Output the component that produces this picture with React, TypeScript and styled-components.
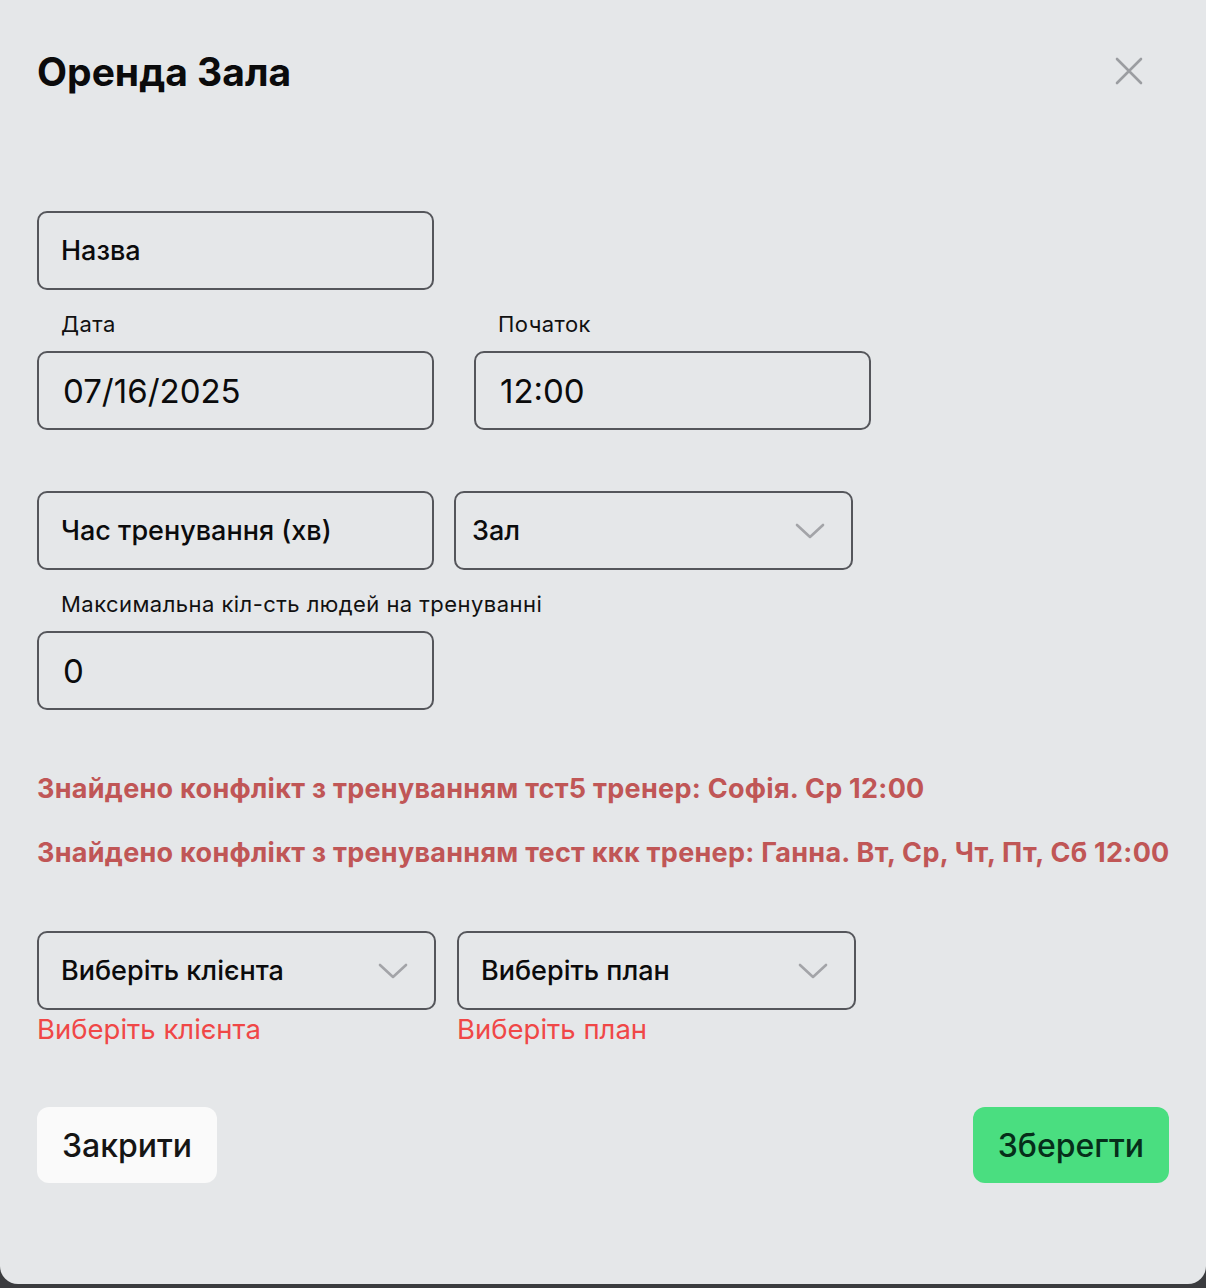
import React from 'react';
import styled, { createGlobalStyle } from 'styled-components';

const GlobalStyle = createGlobalStyle`
  html, body {
    margin: 0;
    padding: 0;
    background: #3b3c3f;
    font-family: Inter, "Noto Sans", "Liberation Sans", sans-serif;
  }
  * { box-sizing: border-box; }
`;

const Modal = styled.div`
  width: 1206px;
  height: 1284px;
  background: #e5e7e9;
  border-radius: 0 0 18px 18px;
  padding: 0 37px;
  display: flex;
  flex-direction: column;
`;

const Header = styled.div`
  display: flex;
  align-items: center;
  justify-content: space-between;
  height: 142px;
`;

const Title = styled.h2`
  margin: 0;
  font-size: 39px;
  font-weight: 700;
  color: #0b0b0c;
`;

const CloseButton = styled.button`
  width: 40px;
  height: 40px;
  border: none;
  background: transparent;
  padding: 0;
  margin-right: 20px;
  display: flex;
  align-items: center;
  justify-content: center;
  cursor: pointer;
`;

const Form = styled.div`
  display: flex;
  flex-direction: column;
  padding-top: 69px;
`;

const Row = styled.div<{ $gap: number; $mt?: number }>`
  display: flex;
  align-items: flex-start;
  gap: ${p => p.$gap}px;
  margin-top: ${p => p.$mt ?? 0}px;
`;

const Field = styled.div`
  display: flex;
  flex-direction: column;
`;

const Label = styled.div`
  font-size: 22px;
  letter-spacing: 0.45px;
  color: #111;
  padding-left: 24px;
  height: 40px;
  line-height: 26px;
  margin-top: 21px;
`;

const InputBox = styled.div<{ $w?: number; $big?: boolean; $pl?: number }>`
  width: ${p => p.$w ?? 397}px;
  height: 79px;
  border: 2px solid #55565b;
  border-radius: 10px;
  display: flex;
  align-items: center;
  justify-content: space-between;
  padding: 0 26px 0 ${p => p.$pl ?? (p.$big ? 24 : 22)}px;
  font-size: ${p => (p.$big ? 33 : 27)}px;
  font-weight: ${p => (p.$big ? 400 : 500)};
  color: #0b0b0c;
`;

const SelectText = styled.span`
  font-size: 27px;
  font-weight: 500;
  color: #0b0b0c;
`;

const Conflicts = styled.div`
  display: flex;
  flex-direction: column;
  gap: 34px;
  margin-top: 64px;
`;

const Conflict = styled.div`
  font-size: 27px;
  font-weight: 700;
  color: #c05656;
  line-height: 30px;
  letter-spacing: 0.28px;
  white-space: nowrap;
`;

const ErrorText = styled.div`
  font-size: 27.5px;
  color: #f04747;
  margin-top: 3px;
  line-height: 32px;
`;

const Footer = styled.div`
  display: flex;
  justify-content: space-between;
  margin-top: 62px;
`;

const Button = styled.button<{ $primary?: boolean }>`
  height: 76px;
  padding: 0 25px;
  border: none;
  border-radius: 12px;
  font-family: inherit;
  font-size: 32px;
  font-weight: 500;
  background: ${p => (p.$primary ? '#4ade80' : '#fafafa')};
  color: ${p => (p.$primary ? '#062e1a' : '#151515')};
  cursor: pointer;
`;

const Chevron = () => (
  <svg width="30" height="18" viewBox="0 0 30 18" fill="none">
    <path d="M2 3 L15 15 L28 3" stroke="#a3a4a8" strokeWidth="2.6" strokeLinecap="round" strokeLinejoin="round" />
  </svg>
);

const CloseIcon = () => (
  <svg width="28" height="28" viewBox="0 0 28 28" fill="none">
    <path d="M2 2 L26 26 M26 2 L2 26" stroke="#9b9da1" strokeWidth="2.6" strokeLinecap="round" />
  </svg>
);

export default function App() {
  return (
    <>
      <GlobalStyle />
      <Modal>
        <Header>
          <Title>Оренда Зала</Title>
          <CloseButton aria-label="close">
            <CloseIcon />
          </CloseButton>
        </Header>

        <Form>
          <InputBox>Назва</InputBox>

          <Row $gap={40}>
            <Field>
              <Label>Дата</Label>
              <InputBox $big>07/16/2025</InputBox>
            </Field>
            <Field>
              <Label>Початок</Label>
              <InputBox $big>12:00</InputBox>
            </Field>
          </Row>

          <Row $gap={20} $mt={61}>
            <InputBox>Час тренування (хв)</InputBox>
            <InputBox $w={399} $pl={16}>
              <SelectText>Зал</SelectText>
              <Chevron />
            </InputBox>
          </Row>

          <Field>
            <Label>Максимальна кіл-сть людей на тренуванні</Label>
            <InputBox $big>0</InputBox>
          </Field>

          <Conflicts>
            <Conflict>Знайдено конфлікт з тренуванням тст5 тренер: Софія. Ср 12:00</Conflict>
            <Conflict>Знайдено конфлікт з тренуванням тест ккк тренер: Ганна. Вт, Ср, Чт, Пт, Сб 12:00</Conflict>
          </Conflicts>

          <Row $gap={21} $mt={63}>
            <Field>
              <InputBox $w={399}>
                <SelectText>Виберіть клієнта</SelectText>
                <Chevron />
              </InputBox>
              <ErrorText>Виберіть клієнта</ErrorText>
            </Field>
            <Field>
              <InputBox $w={399}>
                <SelectText>Виберіть план</SelectText>
                <Chevron />
              </InputBox>
              <ErrorText>Виберіть план</ErrorText>
            </Field>
          </Row>

          <Footer>
            <Button>Закрити</Button>
            <Button $primary>Зберегти</Button>
          </Footer>
        </Form>
      </Modal>
    </>
  );
}
